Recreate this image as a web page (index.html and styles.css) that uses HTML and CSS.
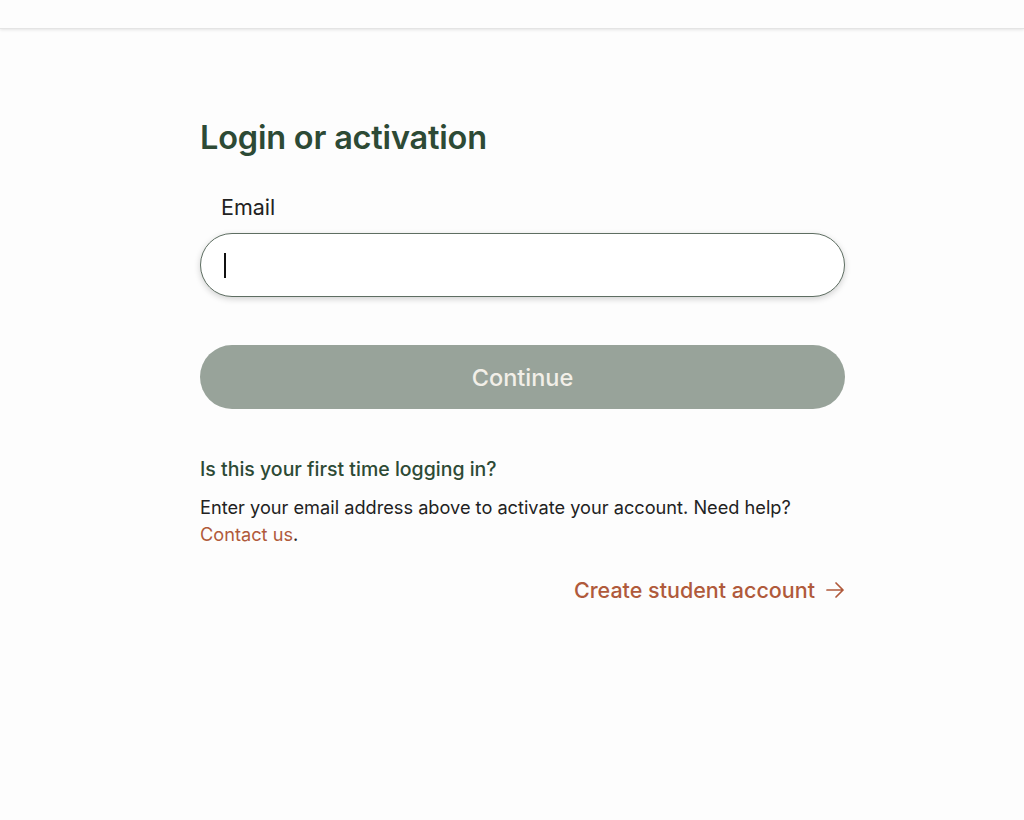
FILE: index.html
```html
<!DOCTYPE html>
<html lang="en">
<head>
<meta charset="utf-8">
<title>Login or activation</title>
<link rel="stylesheet" href="styles.css">
</head>
<body>
<header class="topbar"></header>
<main class="page">
  <section class="card">
    <h1 class="title">Login or activation</h1>
    <form class="form">
      <label class="label" for="email">Email</label>
      <div class="input">
        <span class="caret"></span>
      </div>
      <button type="button" class="btn">Continue</button>
    </form>
    <h2 class="subtitle">Is this your first time logging in?</h2>
    <p class="text">Enter your email address above to activate your account. Need help? <a class="link" href="#">Contact us</a>.</p>
    <div class="create-row">
      <a class="create" href="#">Create student account
        <svg class="arrow" width="20" height="20" viewBox="0 0 20 20" fill="none" stroke="currentColor" stroke-width="1.7" stroke-linecap="round" stroke-linejoin="round"><path d="M2 10h16M11 3l7 7-7 7"/></svg>
      </a>
    </div>
  </section>
</main>
</body>
</html>
```
FILE: styles.css
```css
* { box-sizing: border-box; }
html, body { margin: 0; padding: 0; }
body {
  background: #fdfdfd;
  font-family: Inter, "Noto Sans", sans-serif;
  color: #222;
  height: 820px;
}
.topbar {
  height: 29px;
  background: #fdfdfd;
  border-bottom: 1px solid #e4e4e4;
  box-shadow: 0 1px 3px rgba(0,0,0,0.10);
}
.page {
  display: flex;
  justify-content: flex-start;
  padding-left: 200px;
}
.card {
  width: 645px;
  padding-top: 89px;
}
.title {
  margin: 0;
  font-size: 32.5px;
  font-weight: 600;
  color: #2d4a35;
  line-height: 40px;
  letter-spacing: -0.2px;
}
.form {
  display: flex;
  flex-direction: column;
  margin-top: 35px;
}
.label {
  font-size: 21.5px;
  line-height: 28px;
  padding-left: 21px;
  color: #222;
}
.input {
  margin-top: 12px;
  height: 64px;
  border: 1px solid #5e6e62;
  border-radius: 32px;
  background: #fff;
  box-shadow: 0 2px 6px rgba(0,0,0,0.18);
  display: flex;
  align-items: center;
  padding-left: 23px;
}
.caret {
  width: 2px;
  height: 25px;
  background: #111;
}
.btn {
  margin-top: 48px;
  height: 64px;
  border: none;
  border-radius: 32px;
  background: #98a39a;
  color: #f2efe8;
  font-family: inherit;
  font-size: 23.5px;
  font-weight: 500;
}
.subtitle {
  margin: 48px 0 0;
  font-size: 19.5px;
  font-weight: 500;
  line-height: 24px;
  color: #2d4a35;
}
.text {
  margin: 13px 0 0;
  font-size: 18.2px;
  line-height: 27px;
  color: #222;
}
.link {
  color: #b05a3b;
  text-decoration: none;
}
.create-row {
  display: flex;
  justify-content: flex-end;
  margin-top: 28px;
}
.create {
  display: flex;
  align-items: center;
  gap: 10px;
  color: #b05a3b;
  font-size: 21.5px;
  font-weight: 500;
  text-decoration: none;
  line-height: 28px;
}
.arrow { display: block; }
```
